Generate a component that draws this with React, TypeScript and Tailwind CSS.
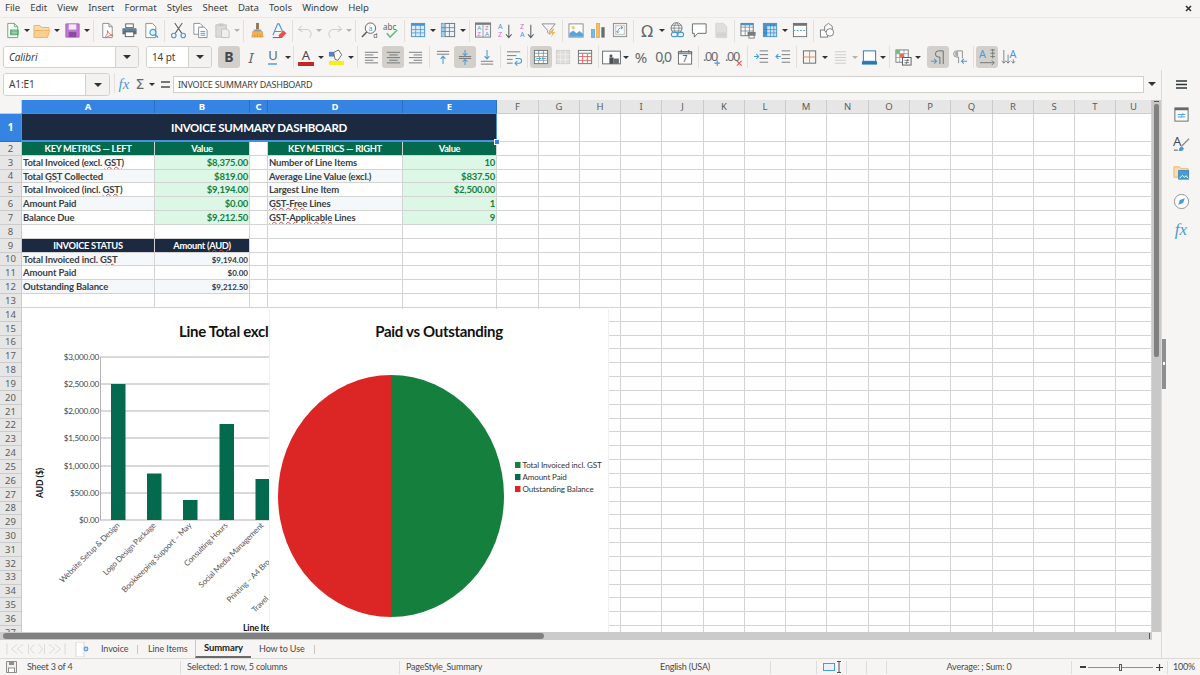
import React from "react";

const Sv = ({ children, s = 17 }: { children: React.ReactNode; s?: number }) => (
  <svg width={s} height={s} viewBox="0 0 18 18" fill="none" className="shrink-0 overflow-visible">
    {children}
  </svg>
);

const Btn = ({ children, active, w }: { children?: React.ReactNode; active?: boolean; w?: string }) => (
  <span
    className={`${w ?? "w-[22px]"} h-[22px] shrink-0 flex items-center justify-center rounded-[3px] ${
      active ? "bg-[#d3d0cc]" : ""
    }`}
  >
    {children}
  </span>
);

const Drop = ({ light }: { light?: boolean }) => (
  <span className="w-[8px] shrink-0 flex justify-center">
    <svg width="6" height="3" viewBox="0 0 6 3">
      <path d="M0 0h6L3 3z" fill={light ? "#b5b3b0" : "#2e3436"} />
    </svg>
  </span>
);

const Sep = ({ w }: { w?: string }) => (
  <span className={`${w ?? "w-[5px]"} shrink-0 h-[22px] flex justify-center`}>
    <span className="w-px h-full bg-[#e2e0dd]" />
  </span>
);

const G = "#5a5f62";
const B = "#4a9ad4";

/* toolbar 1 icons */
const INew = () => (
  <Sv>
    <path d="M4 1.5h7l3.5 3.5v11.5H4z" fill="#fff" stroke="#5aae72" />
    <path d="M11 1.5V5h3.5" stroke="#5aae72" />
    <rect x="6.5" y="8" width="9" height="6" fill="#4aa567" />
    <path d="M8 9.5h6M8 11h6M8 12.5h6" stroke="#d6f0de" strokeWidth=".7" />
  </Sv>
);
const IOpen = () => (
  <Sv s={18}>
    <path d="M1 3.5h6l1.5 2H16v3H1z" fill="#f9dcae" stroke="#efb365" />
    <path d="M1 15.5V8.5h15.5l-2 7z" fill="#fbcf8f" stroke="#efb365" />
  </Sv>
);
const ISave = () => (
  <Sv>
    <path d="M2 2h14v14H2z" fill="#c07ad2" stroke="#ab5ec0" />
    <rect x="5" y="2.5" width="8" height="5.5" fill="#f7ecfa" />
    <rect x="5" y="10.5" width="8" height="5.5" fill="#8d4aa2" />
  </Sv>
);
const IPdf = () => (
  <Sv>
    <path d="M4 1.5h6.5L14 5v11.5H4z" fill="#fff" stroke="#8a8e91" />
    <path d="M10.5 1.5V5H14" stroke="#8a8e91" />
    <path d="M6.5 16c2-2 3-5 2.5-7 1 3 3 5 6 5-3 0-6 1-8 3" stroke="#e8695e" fill="none" />
  </Sv>
);
const IPrint = () => (
  <Sv>
    <rect x="5" y="2" width="8" height="4" fill="#fff" stroke={G} />
    <path d="M1.5 7.5a1 1 0 011-1h13a1 1 0 011 1V13h-15z" fill="#666e72" />
    <rect x="4.5" y="10.5" width="9" height="5" fill="#fff" stroke={G} />
    <rect x="2" y="8" width="14" height="1" fill={B} />
  </Sv>
);
const IPreview = () => (
  <Sv>
    <path d="M3 1.5h7L13.5 5v11.5H3z" fill="#fff" stroke="#8a8e91" />
    <circle cx="10.5" cy="11" r="3.2" fill="#e5f1fa" stroke={B} strokeWidth="1.2" />
    <path d="M13 13.5l3 3" stroke={B} strokeWidth="1.4" />
  </Sv>
);
const ICut = () => (
  <Sv>
    <path d="M5 1l7.5 11M13 1L5.5 12" stroke={G} strokeWidth="1.1" />
    <circle cx="4" cy="14.3" r="2.4" stroke={B} strokeWidth="1.2" />
    <circle cx="14" cy="14.3" r="2.4" stroke={B} strokeWidth="1.2" />
  </Sv>
);
const ICopy = () => (
  <Sv>
    <path d="M2 1.5h6.5L11 4v9H2z" fill="#fff" stroke="#8a8e91" />
    <path d="M7 5.5h6l3 3v8H7z" fill="#fff" stroke="#8a8e91" />
    <path d="M9 10h5M9 12h5M9 14h5" stroke={B} />
  </Sv>
);
const IPaste = () => (
  <Sv>
    <path d="M2 3h11v13H2z" fill="#dcdbd9" stroke="#c2c1bf" />
    <rect x="5" y="1.5" width="5" height="3" fill="#c8c7c5" />
    <path d="M8 7.5h6l2 2v7H8z" fill="#f0efed" stroke="#c2c1bf" />
  </Sv>
);
const IClone = () => (
  <Sv>
    <rect x="7.5" y="1" width="3" height="7" fill="#94744f" />
    <path d="M5 8h8v2H5z" fill="#9a9d9f" />
    <path d="M4 10h10l1 6H3z" fill="#f4b256" stroke="#cf8d30" strokeWidth=".6" />
    <path d="M6 16v-3M9 16v-4M12 16v-3" stroke="#cf8d30" strokeWidth=".7" />
  </Sv>
);
const IClear = () => (
  <Sv>
    <path d="M2 14L7 2h1.5L13 12M4 10h7" stroke={B} strokeWidth="1.2" />
    <path d="M8 14l5-5 3.5 3-5 5H9z" fill="#e8524d" />
    <path d="M2 16.5h8" stroke={G} />
  </Sv>
);
const IUndo = () => (
  <Sv>
    <path d="M5 4L1.5 8 6 10.5M2 8h8a5 5 0 015 5 4 4 0 01-2 3.5" stroke="#cfcecc" strokeWidth="1.1" />
  </Sv>
);
const IRedo = () => (
  <Sv>
    <path d="M13 4l3.5 4-4.5 2.5M16 8H8a5 5 0 00-5 5 4 4 0 002 3.5" stroke="#cfcecc" strokeWidth="1.1" />
  </Sv>
);
const IFind = () => (
  <Sv>
    <circle cx="10" cy="6.5" r="5.5" fill="#fff" stroke={G} />
    <path d="M6 10.5L1 16" stroke={G} strokeWidth="1.6" />
    <text x="10" y="9" textAnchor="middle" fontSize="7.5" fill={B} fontFamily="Noto Sans, sans-serif">a</text>
    <text x="13" y="17" fontSize="7.5" fill={G} fontFamily="Noto Sans, sans-serif">d</text>
  </Sv>
);
const ISpell = () => (
  <Sv>
    <text x="0" y="8" fontSize="8.5" fill={G} fontFamily="Noto Sans, sans-serif">abc</text>
    <path d="M4 12l3.5 4L15 8.5" stroke="#5fbf7c" strokeWidth="1.6" />
  </Sv>
);
const ITable = () => (
  <Sv>
    <rect x="1.5" y="1.5" width="14" height="14" fill="#dcedf9" stroke="#4a94d2" />
    <rect x="1.5" y="1.5" width="14" height="2.5" fill="#4a94d2" />
    <path d="M1.5 8h14M1.5 11.5h14M6 1.5v14M11 1.5v14" stroke="#4a94d2" strokeWidth=".8" />
  </Sv>
);
const ITable2 = () => (
  <Sv>
    <rect x="1.5" y="1.5" width="14" height="14" fill="#eaf3fa" stroke="#6a7478" />
    <rect x="1.5" y="1.5" width="4" height="14" fill="#a2cdec" />
    <path d="M1.5 6h14M1.5 10h14M5.5 1.5v14M10 1.5v14" stroke="#6a7478" strokeWidth=".8" />
  </Sv>
);
const Lt = ({ x, y, c, t, s = 6.5 }: { x: number; y: number; c: string; t: string; s?: number }) => (
  <text x={x} y={y} fontSize={s} fill={c} fontFamily="Noto Sans, sans-serif">
    {t}
  </text>
);
const ISort = () => (
  <Sv>
    <rect x=".5" y="1" width="16" height="15" fill="#f4f3f1" stroke="#777b7e" />
    <rect x=".5" y="1" width="16" height="2" fill="#777b7e" />
    <path d="M8.5 3v13" stroke="#777b7e" strokeWidth=".7" />
    <Lt x={2.5} y={8.8} c={B} t="A" />
    <Lt x={2.5} y={15} c="#c76fd0" t="Z" />
    <Lt x={10.5} y={8.8} c="#c76fd0" t="Z" />
    <Lt x={10.5} y={15} c={B} t="A" />
  </Sv>
);
const ISortA = () => (
  <Sv>
    <Lt x={1} y={7.5} c={B} t="A" s={7.5} />
    <Lt x={1} y={16} c="#c76fd0" t="Z" s={7.5} />
    <path d="M12.5 3v13M9.5 13l3 3.5 3-3.5" stroke={G} strokeWidth="1.1" />
  </Sv>
);
const ISortD = () => (
  <Sv>
    <Lt x={1} y={7.5} c="#c76fd0" t="Z" s={7.5} />
    <Lt x={1} y={16} c={B} t="A" s={7.5} />
    <path d="M12.5 3v13M9.5 13l3 3.5 3-3.5" stroke={G} strokeWidth="1.1" />
  </Sv>
);
const IFilter = () => (
  <Sv>
    <path d="M1 2h14L9.5 9v4L7 11V9z" fill="#f8f7f5" stroke="#8a8e91" />
    <path d="M12.5 7l-3 5h2.5l-1.5 4.5 4.5-6h-2.5l1.5-3.5z" fill="#f4b256" />
  </Sv>
);
const IImage = () => (
  <Sv>
    <rect x="1" y="2" width="15" height="14" fill="#fff" stroke="#8a8e91" />
    <circle cx="5.5" cy="6" r="1.8" fill="#f7c26a" />
    <path d="M1.5 15.5V12l4-3 3.5 3 3-2.5 4 3v3z" fill="#5aa6dc" />
  </Sv>
);
const IChart = () => (
  <Sv>
    <rect x="1.5" y="8" width="3.5" height="8.5" fill="#7db8e2" stroke={B} strokeWidth=".6" />
    <rect x="6.8" y="1.5" width="3.5" height="15" fill="#f5bd5f" stroke="#e09c36" strokeWidth=".6" />
    <rect x="12" y="5.5" width="3.5" height="11" fill="#646d71" />
  </Sv>
);
const IPivot = () => (
  <Sv>
    <rect x="1.5" y="1.5" width="14" height="14" fill="#f1f0ee" stroke="#8a8e91" />
    <rect x="4" y="4" width="9" height="9" fill="#fff" stroke="#c2c1bf" />
    <path d="M6 11c0-3 2-5 5-5M9.5 4.5L11.5 6 9.5 7.5M4.8 9.5L6 11.5l1.5-1.5" stroke={B} />
  </Sv>
);
const IOmega = () => (
  <Sv>
    <text x="8.5" y="15.5" textAnchor="middle" fontSize="17" fill="#646a6d" fontFamily="DejaVu Sans, sans-serif">Ω</text>
  </Sv>
);
const ILink = () => (
  <Sv>
    <circle cx="8" cy="6.5" r="5.8" stroke="#646a6d" strokeWidth=".9" />
    <path d="M2.2 6.5h11.6M8 .7c-3.5 3.5-3.5 8 0 11.6M8 .7c3.5 3.5 3.5 8 0 11.6M3 3.5h10M3 9.5h10" stroke="#646a6d" strokeWidth=".7" />
    <rect x="2.5" y="11" width="7" height="4.5" rx="2.2" fill="#f6f5f4" stroke={B} strokeWidth="1.1" />
    <rect x="8.5" y="11" width="7" height="4.5" rx="2.2" stroke={B} strokeWidth="1.1" />
  </Sv>
);
const IComment = () => (
  <Sv>
    <path d="M1.5 2h14.5v10H7L3.5 16v-4h-2z" fill="#fff" stroke="#646a6d" />
  </Sv>
);
const IHeader = () => (
  <Sv>
    <path d="M3 1.5h8l3.5 3.5v11.5H3z" fill="#dfdedc" stroke="#d6d5d3" />
    <rect x="4" y="11" width="10" height="4.5" fill="#d4d3d1" />
  </Sv>
);
const IPrintArea = () => (
  <Sv>
    <rect x="1" y="1.5" width="13" height="13" fill="#fbfbfa" stroke="#6a7478" />
    <path d="M1 5.5h13M1 9.5h13M5.5 1.5v13M10 1.5v13" stroke="#6a7478" strokeWidth=".7" />
    <rect x="1" y="1.5" width="13" height="2" fill="#4a94d2" />
    <rect x="8" y="10.5" width="8.5" height="4" fill="#777b7e" />
    <rect x="9.5" y="14" width="5.5" height="3" fill="#fff" stroke="#777b7e" />
  </Sv>
);
const IFreeze = () => (
  <Sv>
    <rect x="1.5" y="1.5" width="14" height="14" fill="#c8e4f7" stroke="#4a94d2" />
    <rect x="1.5" y="1.5" width="14" height="3" fill="#4a94d2" />
    <rect x="1.5" y="1.5" width="4" height="14" fill="#4a94d2" />
    <path d="M1.5 8h14M1.5 11.5h14M9 1.5v14M12.5 1.5v14" stroke="#2b78bd" strokeWidth=".6" />
  </Sv>
);
const ISplit = () => (
  <Sv>
    <rect x="1.5" y="1.5" width="14" height="14" fill="#fff" stroke="#6a7478" />
    <rect x="1.5" y="1.5" width="14" height="2.5" fill="#6a7478" />
    <path d="M1.5 9h14" stroke={B} strokeDasharray="2 1.5" />
  </Sv>
);
const IShapes = () => (
  <Sv>
    <rect x="1.5" y="8.5" width="7.5" height="7.5" fill="#fff" stroke="#777b7e" />
    <path d="M10 1.5l4 3v5l-4 3-4-3v-5z" fill="#fff" stroke="#777b7e" />
    <circle cx="11.5" cy="11" r="4" fill="#fff" stroke="#777b7e" />
  </Sv>
);

/* toolbar 2 icons */
const Tx = ({ t, c = "#45494c", cls = "" }: { t: string; c?: string; cls?: string }) => (
  <span style={{ color: c }} className={`leading-none font-['Noto_Sans',sans-serif] ${cls}`}>
    {t}
  </span>
);
const IBold = () => <Tx t="B" cls="font-bold text-[14px]" />;
const IItalic = () => <Tx t="I" c="#646a6d" cls="italic text-[15px] font-['Liberation_Serif',serif]" />;
const IUnder = () => (
  <span className="flex flex-col items-center">
    <Tx t="U" c="#646a6d" cls="text-[13px]" />
    <span className="w-[9px] h-[1.5px] bg-[#7ab4e2] mt-px" />
  </span>
);
const IFontColor = () => (
  <span className="flex flex-col items-center w-[16px]">
    <Tx t="A" c="#45494c" cls="text-[13px]" />
    <span className="w-[16px] h-[4px] bg-[#c22626]" />
  </span>
);
const IHighlight = () => (
  <Sv>
    <path d="M1 3h8v5H1z" fill="#4b86c9" />
    <path d="M6 4l5-3 3.5 5-4 6-3-1z" fill="#fff" stroke="#646a6d" />
    <rect x="1" y="12.5" width="16" height="4.5" fill="#f5ee1e" />
  </Sv>
);
const Lines = ({ a }: { a: "l" | "c" | "r" }) => {
  const rows = [14, 9, 14, 9, 14];
  return (
    <Sv>
      {rows.map((w, i) => {
        const x = a === "l" ? 2 : a === "r" ? 16 - w : 9 - w / 2;
        return <path key={i} d={`M${x} ${3.5 + i * 2.8}h${w}`} stroke="#646a6d" strokeWidth=".9" />;
      })}
    </Sv>
  );
};
const IVTop = () => (
  <Sv>
    <path d="M2 2.5h13M2 5.5h13" stroke="#646a6d" strokeWidth=".9" />
    <path d="M8.5 16V8M6 10.5l2.5-3 2.5 3" stroke={B} strokeWidth="1.1" />
  </Sv>
);
const IVMid = () => (
  <Sv>
    <path d="M2 8h13M2 10h13" stroke="#646a6d" strokeWidth=".9" />
    <path d="M8.5 1v6M6 4.5L8.5 7 11 4.5M8.5 17v-6M6 13.5L8.5 11l2.5 2.5" stroke={B} strokeWidth="1.1" />
  </Sv>
);
const IVBot = () => (
  <Sv>
    <path d="M2 13h13M2 16h13" stroke="#646a6d" strokeWidth=".9" />
    <path d="M8.5 1v9M6 7.5l2.5 3 2.5-3" stroke={B} strokeWidth="1.1" />
  </Sv>
);
const IWrap = () => (
  <Sv>
    <path d="M1 3h14M1 7h10M1 11h6M1 15h6" stroke="#646a6d" strokeWidth=".9" />
    <path d="M10 10h4a2 2 0 010 5h-4M12 12.5L9.5 15l2.5 2.5" stroke={B} strokeWidth="1.1" />
  </Sv>
);
const IMerge = () => (
  <Sv>
    <rect x="1.5" y="1.5" width="14" height="14" fill="#fff" stroke="#6a7478" />
    <path d="M1.5 4.5h14M1.5 8h14M1.5 12h14M6 1.5V8M11 1.5V8M6 12v3.5M11 12v3.5" stroke="#6a7478" strokeWidth=".7" />
    <path d="M3.5 10H8M14 10H9.5M6.5 8.5L8 10l-1.5 1.5M11 8.5L9.5 10l1.5 1.5" stroke={B} />
  </Sv>
);
const IGreyGrid = () => (
  <Sv>
    <rect x="1.5" y="1.5" width="14" height="14" fill="#dfdedc" stroke="#cfcecc" />
    <path d="M1.5 6h14M1.5 11h14M6 1.5v14M11 1.5v14" stroke="#f1f0ee" strokeWidth=".8" />
  </Sv>
);
const IRedGrid = () => (
  <Sv>
    <rect x="1.5" y="1.5" width="14" height="14" fill="#fff" stroke="#6a7478" />
    <path d="M1.5 4.5h14" stroke="#6a7478" />
    <path d="M2 8h13M2 12h13M6 5v10M11 5v10" stroke="#de5a52" strokeWidth=".9" />
  </Sv>
);
const ICurrency = () => (
  <Sv s={19}>
    <rect x=".5" y="3" width="17" height="12" fill="#fbfbfa" stroke="#777b7e" />
    <rect x="7" y="9" width="4" height="6" fill="#4a5053" />
    <rect x="11" y="10" width="5" height="5" fill="#646a6d" />
    <circle cx="8.5" cy="7.5" r="1.4" fill="#4a5053" />
  </Sv>
);
const IPercent = () => <Tx t="%" c="#646a6d" cls="text-[15px]" />;
const INum = () => <Tx t="0,0" c="#646a6d" cls="text-[14px] tracking-[-1.5px]" />;
const IDate = () => (
  <Sv>
    <rect x="1.5" y="3" width="14" height="13" fill="#fff" stroke="#646a6d" />
    <path d="M1.5 3h14v2h-14zM4.5 1v3M12.5 1v3" stroke="#646a6d" />
    <text x="8.5" y="14" textAnchor="middle" fontSize="9" fill="#45494c" fontFamily="Noto Sans, sans-serif">7</text>
  </Sv>
);
const IDec = ({ add }: { add?: boolean }) => (
  <Sv>
    <text x="-1" y="13" fontSize="13.5" letterSpacing="-1.5" fill="#646a6d" fontFamily="Noto Sans, sans-serif">.00</text>
    {add ? (
      <path d="M14 12v6M11 15h6" stroke={B} strokeWidth="1.2" />
    ) : (
      <path d="M11.5 12.5l5 5M16.5 12.5l-5 5" stroke="#e8564e" strokeWidth="1.2" />
    )}
  </Sv>
);
const IIndent = ({ out }: { out?: boolean }) => (
  <Sv>
    <path d="M7 2h9M7 6h9M7 10h9M7 14h9" stroke="#646a6d" strokeWidth=".9" />
    {out ? (
      <path d="M6 8H1M3.5 5.5L1 8l2.5 2.5" stroke={B} strokeWidth="1.1" />
    ) : (
      <path d="M1 8h5M3.5 5.5L6 8l-2.5 2.5" stroke={B} strokeWidth="1.1" />
    )}
  </Sv>
);
const IBorders = () => (
  <Sv>
    <rect x="1.5" y="2" width="13" height="13" stroke="#646a6d" />
    <path d="M8 2v13M1.5 8.5h13" stroke="#de8c45" />
  </Sv>
);
const IBorderStyle = () => (
  <Sv>
    <path d="M3 3h12M3 6h12M3 9h12M3 12h12M3 15h12" stroke="#cfcecc" strokeWidth="1.1" />
  </Sv>
);
const IBorderColor = () => (
  <Sv>
    <rect x="2.5" y="2" width="13" height="11" fill="#fff" stroke="#2a76b8" />
    <rect x="1" y="13" width="16" height="3.5" fill="#2a76b8" />
  </Sv>
);
const ICond = () => (
  <Sv>
    <rect x="1" y="1" width="13" height="13" fill="#fff" stroke="#777b7e" />
    <path d="M1 5h13M1 9h13M5 1v13M9.5 1v13" stroke="#777b7e" strokeWidth=".6" />
    <rect x="1" y="1" width="4" height="4" fill="#78bb87" />
    <rect x="5" y="5" width="4.5" height="4" fill="#e66c62" />
    <rect x="8" y="9" width="9" height="8" fill="#fff" stroke="#55595c" />
    <path d="M10 12h5M10 14.5h5M13.8 10.5l-2 5.5" stroke="#55595c" strokeWidth=".8" />
  </Sv>
);
const ILtr = () => (
  <Sv>
    <path d="M14 2H9a3.2 3.2 0 000 6.5h1.5V16M14 2v14" stroke="#646a6d" strokeWidth="1" />
    <path d="M1 13h6M4.5 10.5L7 13l-2.5 2.5" stroke={B} strokeWidth="1.1" />
  </Sv>
);
const IRtl = () => (
  <Sv>
    <path d="M11 2H5a3.2 3.2 0 000 6.5h2V15M11 2v8" stroke="#8a8e91" strokeWidth="1" />
    <path d="M5 2.5a3 3 0 000 5.5h1.5V2.5z" fill="#a9a8a6" />
    <path d="M16 13h-6M12.5 10.5L10 13l2.5 2.5" stroke={B} strokeWidth="1.1" />
  </Sv>
);
const IHoriz = () => (
  <Sv>
    <text x="0" y="10" fontSize="11.5" fill={B} fontFamily="Noto Sans, sans-serif">A</text>
    <path d="M12 1h5M12 4.5h5M12 8h5M14.5 0v10" stroke="#646a6d" strokeWidth=".8" />
    <path d="M1 14.5h15M13.5 12l2.5 2.5L13.5 17" stroke="#646a6d" strokeWidth=".9" />
  </Sv>
);
const IVert = () => (
  <Sv>
    <text x="9" y="10" fontSize="11.5" fill={B} fontFamily="Noto Sans, sans-serif">A</text>
    <path d="M3 1v14M.8 12.5L3 15l2.2-2.5M7.5 6v9M5.3 12.5L7.5 15l2.2-2.5M13 11v4M11 13l2 2 2-2" stroke="#646a6d" strokeWidth=".8" />
  </Sv>
);

const Combo = ({ w, bw, text, italic, h }: { w: string; bw: string; text: string; italic?: boolean; h?: string }) => (
  <div className={`${w} ${h ?? "h-[23px]"} shrink-0 flex border border-[#d3d1cd] rounded-[3px] overflow-hidden`}>
    <div className={`flex-1 bg-white flex items-center pl-[5px] text-[10px] tracking-[-0.1px] text-[#3d3d3d] ${italic ? "italic" : ""}`}>{text}</div>
    <div className={`${bw} bg-[#f3f2f0] border-l border-[#d3d1cd] flex items-center justify-center`}>
      <svg width="8" height="4" viewBox="0 0 8 4">
        <path d="M0 0h8L4 4z" fill="#2e3436" />
      </svg>
    </div>
  </div>
);

const MENUS = ["File", "Edit", "View", "Insert", "Format", "Styles", "Sheet", "Data", "Tools", "Window", "Help"];

const Menu = () => (
  <div className="h-[17px] shrink-0 flex items-center pl-[5px] gap-[10.3px] text-[9.6px] text-[#3a3f42] tracking-[-0.1px]">
    {MENUS.map((m) => (
      <span key={m}>{m}</span>
    ))}
    <span className="ml-auto mr-[8px]">
      <svg width="7" height="7" viewBox="0 0 7 7">
        <path d="M1 1l5 5M6 1L1 6" stroke="#2e3436" strokeWidth="1.6" />
      </svg>
    </span>
  </div>
);

const Toolbar1 = () => (
  <div className="h-[26px] shrink-0 flex items-center pl-[1px] border-t border-[#ebe9e7]">
    <Btn><INew /></Btn><Drop />
    <Btn><IOpen /></Btn><Drop />
    <Btn><ISave /></Btn><Drop />
    <Sep />
    <Btn><IPdf /></Btn><Btn><IPrint /></Btn><Btn><IPreview /></Btn>
    <Sep />
    <Btn><ICut /></Btn><Btn><ICopy /></Btn><Btn><IPaste /></Btn><Drop light />
    <Sep />
    <Btn><IClone /></Btn><Btn><IClear /></Btn>
    <Sep />
    <Btn w="w-[20px]"><IUndo /></Btn><Drop light /><Btn><IRedo /></Btn><Drop light />
    <Sep />
    <Btn><IFind /></Btn><Btn><ISpell /></Btn>
    <Sep />
    <Btn><ITable /></Btn><Drop /><Btn><ITable2 /></Btn><Drop />
    <Sep />
    <Btn><ISort /></Btn><Btn><ISortA /></Btn><Btn><ISortD /></Btn><Btn><IFilter /></Btn>
    <Sep />
    <Btn><IImage /></Btn><Btn><IChart /></Btn><Btn><IPivot /></Btn>
    <Sep />
    <Btn><IOmega /></Btn><Drop /><Btn><ILink /></Btn><Btn><IComment /></Btn><Btn><IHeader /></Btn>
    <Sep />
    <Btn><IPrintArea /></Btn><Btn><IFreeze /></Btn><Drop /><Btn><ISplit /></Btn>
    <Sep />
    <Btn><IShapes /></Btn>
  </div>
);

const Toolbar2 = () => (
  <div className="h-[27px] shrink-0 flex items-center pl-[3px] pt-px">
    <Combo w="w-[136px]" bw="w-[23px]" text="Calibri" italic h="h-[22px]" />
    <span className="w-[7px] shrink-0" />
    <Combo w="w-[66px]" bw="w-[23px]" text="14 pt" h="h-[22px]" />
    <span className="w-[6px] shrink-0" />
    <Btn active><IBold /></Btn><Btn><IItalic /></Btn><Btn><IUnder /></Btn><Drop />
    <Sep w="w-[3px]" />
    <Btn><IFontColor /></Btn><Drop /><Btn><IHighlight /></Btn><Drop />
    <Sep />
    <Btn><Lines a="l" /></Btn><Btn active><Lines a="c" /></Btn><Btn><Lines a="r" /></Btn>
    <Sep w="w-[6px]" />
    <Btn><IVTop /></Btn><Btn active><IVMid /></Btn><Btn><IVBot /></Btn>
    <Sep />
    <Btn><IWrap /></Btn>
    <Sep />
    <Btn active><IMerge /></Btn><Btn><IGreyGrid /></Btn><Btn><IRedGrid /></Btn>
    <Sep />
    <Btn w="w-[21px]"><ICurrency /></Btn><Drop />
    <Btn><IPercent /></Btn><Btn><INum /></Btn><Btn><IDate /></Btn>
    <Sep />
    <Btn><IDec add /></Btn><Btn><IDec /></Btn>
    <Sep />
    <Btn><IIndent /></Btn><Btn><IIndent out /></Btn>
    <Sep />
    <Btn><IBorders /></Btn><Drop /><Btn><IBorderStyle /></Btn><Drop light />
    <Btn w="w-[20px]"><IBorderColor /></Btn><Drop />
    <Sep />
    <Btn><ICond /></Btn><Drop />
    <span className="w-[5px] shrink-0" />
    <Btn active><ILtr /></Btn><Btn><IRtl /></Btn>
    <Sep />
    <Btn active><IHoriz /></Btn><Btn><IVert /></Btn>
  </div>
);

const Formula = () => (
  <div className="h-[30px] shrink-0 flex items-start pt-[3px] pl-[3px]">
    <Combo w="w-[107px]" bw="w-[24px]" text="A1:E1" />
    <span className="w-[5px] shrink-0 h-[20px] flex justify-end"><span className="w-px h-full bg-[#e2e0dd]" /></span>
    <span className="w-[18px] h-[22px] flex items-center justify-center italic font-['Liberation_Serif',serif] text-[15px] text-[#4a9ad4]">
      fx
    </span>
    <span className="w-[14px] h-[22px] flex items-center justify-center text-[14px] text-[#646a6d] font-['DejaVu_Sans',sans-serif]">
      Σ
    </span>
    <span className="w-[10px] h-[22px] flex items-center justify-center">
      <svg width="6" height="3" viewBox="0 0 6 3"><path d="M0 0h6L3 3z" fill="#2e3436" /></svg>
    </span>
    <span className="w-[16px] h-[22px] flex items-center justify-center">
      <svg width="9" height="7" viewBox="0 0 9 7"><path d="M0 1h9M0 6h9" stroke="#4a4f52" strokeWidth="1.4" /></svg>
    </span>
    <div className="w-[971px] h-[17px] mt-[3px] bg-white border border-[#d1cfcb] flex items-center pl-[4px] text-[9px] tracking-[-0.2px] text-[#3d3d3d]">
      INVOICE SUMMARY DASHBOARD
    </div>
    <span className="w-[16px] h-[22px] flex items-center justify-center">
      <svg width="8" height="4" viewBox="0 0 8 4"><path d="M0 0h8L4 4z" fill="#2e3436" /></svg>
    </span>
  </div>
);

/* ----- sheet ----- */
const HEAD = "bg-[#e6e6e6] border-r border-b border-[#cbcbcb] flex items-center justify-center pt-px text-[9.5px] text-[#5c5c5c] overflow-hidden";
const HEAD_SEL = "bg-[#3584e4] border-r border-b border-[#2b6fc5] flex items-center justify-center pt-px text-[9.5px] font-bold text-white overflow-hidden";
const CELL = "border-r border-b border-[#d3d3d3] overflow-hidden whitespace-nowrap flex items-center font-['Lato',sans-serif] bg-white";
const LABEL = `${CELL} pt-px leading-[12px] text-[9.5px] tracking-[-0.15px] font-bold text-[#3a3e42] pl-[1px]`;
const LABEL_T = `${LABEL} !bg-[#f5f8fb]`;
const VALUE = `${CELL} pt-px leading-[12px] text-[9.5px] tracking-[-0.2px] font-bold text-[#15803d] justify-end pr-[1px] !bg-[#dcf7e5]`;
const GREEN_H = `${CELL} pt-px leading-[12px] text-[9.3px] tracking-[-0.3px] font-bold text-white justify-center !bg-[#046a4e]`;
const NAVY_H = `${CELL} pt-px leading-[12px] text-[9.3px] tracking-[-0.3px] font-bold text-white justify-center !bg-[#1b2a41]`;
const AMT = `${CELL} pt-px leading-[12px] text-[8px] font-bold text-[#33373b] justify-end pr-[1px]`;
const AMT_T = `${AMT} !bg-[#f5f8fb]`;

const W = ({ children }: { children: React.ReactNode }) => (
  <span className="underline decoration-wavy decoration-[#e0433a] decoration-[0.6px] underline-offset-[0px]">{children}</span>
);

const COLS = ["A", "B", "C", "D", "E", "F", "G", "H", "I", "J", "K", "L", "M", "N", "O", "P", "Q", "R", "S", "T", "U"];
const Blank = () => <div className={CELL} />;
const Blanks = ({ n }: { n: number }) => (
  <>
    {Array.from({ length: n }).map((_, i) => (
      <Blank key={i} />
    ))}
  </>
);

type Kv = [React.ReactNode, string];
const LEFT: Kv[] = [
  [<span>Total Invoiced (excl. <W>GST</W>)</span>, "$8,375.00"],
  [<span>Total <W>GST</W> Collected</span>, "$819.00"],
  [<span>Total Invoiced (incl. <W>GST</W>)</span>, "$9,194.00"],
  ["Amount Paid", "$0.00"],
  ["Balance Due", "$9,212.50"],
];
const RIGHT: Kv[] = [
  ["Number of Line Items", "10"],
  ["Average Line Value (excl.)", "$837.50"],
  ["Largest Line Item", "$2,500.00"],
  [<span><W>GST-Free</W> Lines</span>, "1"],
  [<span><W>GST-Applicable</W> Lines</span>, "9"],
];
const STATUS: Kv[] = [
  [<span>Total Invoiced incl. <W>GST</W></span>, "$9,194.00"],
  ["Amount Paid", "$0.00"],
  ["Outstanding Balance", "$9,212.50"],
];

const BARS = [
  { x: 111, top: 384 },
  { x: 147, top: 473.5 },
  { x: 183, top: 500 },
  { x: 219.5, top: 424 },
  { x: 255.5, top: 479 },
];
const TICKS: [string, number][] = [
  ["$3,000.00", 357],
  ["$2,500.00", 384],
  ["$2,000.00", 411],
  ["$1,500.00", 438],
  ["$1,000.00", 466],
  ["$500.00", 493],
  ["$0.00", 520],
];
const CATS: [string, number][] = [
  ["Website Setup & Design", 120],
  ["Logo Design Package", 156],
  ["Bookkeeping Support – May", 192],
  ["Consulting Hours", 228],
  ["Social Media Management", 264],
];
const LATO = "Lato, sans-serif";

const BarChart = () => (
  <svg width="247" height="324" viewBox="22 308 247 324" className="absolute left-[22px] top-[208px] bg-white">
    <text x="179" y="337" fontSize="15" letterSpacing="-0.3" fontWeight="700" fill="#111" fontFamily={LATO}>Line Total excl</text>
    {TICKS.map(([t, y]) => (
      <g key={t}>
        <path d={`M100 ${y}H269`} stroke="#b3b3b3" />
        <text x="99" y={y + 3} textAnchor="end" fontSize="8.2" letterSpacing="-0.2" fill="#444" fontFamily={LATO}>{t}</text>
      </g>
    ))}
    <path d="M100.5 357V520" stroke="#b3b3b3" />
    {BARS.map((b) => (
      <rect key={b.x} x={b.x} y={b.top} width="14.5" height={520 - b.top} fill="#046a4e" />
    ))}
    <text transform="translate(43 498) rotate(-90)" fontSize="8.5" fontWeight="700" fill="#111" fontFamily={LATO}>AUD ($)</text>
    {CATS.map(([t, x]) => (
      <text key={t} transform={`translate(${x} 526) rotate(-45)`} textAnchor="end" fontSize="8" letterSpacing="-0.2" fill="#555" fontFamily={LATO}>{t}</text>
    ))}
    <text transform="translate(230 603) rotate(-45)" fontSize="8" letterSpacing="-0.2" fill="#555" fontFamily={LATO}>Printing – A4 Bro</text>
    <text transform="translate(255 613) rotate(-45)" fontSize="8" letterSpacing="-0.2" fill="#555" fontFamily={LATO}>Travel</text>
    <text x="243" y="631" fontSize="8.8" letterSpacing="-0.2" fontWeight="700" fill="#111" fontFamily={LATO}>Line Ite</text>
  </svg>
);

const LEGEND: [string, string, number][] = [
  ["Total Invoiced incl. GST", "#15803d", 465],
  ["Amount Paid", "#046a4e", 477],
  ["Outstanding Balance", "#dc2626", 489],
];

const PieChart = () => (
  <svg width="340" height="323" viewBox="269 309 340 323" className="absolute left-[269px] top-[209px] bg-white">
    <path d="M269.5 309V632M608.5 309V632" stroke="#efefef" />
    <text x="439" y="337" textAnchor="middle" fontSize="15" letterSpacing="-0.3" fontWeight="700" fill="#111" fontFamily={LATO}>Paid vs Outstanding</text>
    <path d="M391 375A113 121 0 0 1 391 617Z" fill="#15803d" />
    <path d="M391 375A113 121 0 0 0 391 617Z" fill="#dc2626" />
    {LEGEND.map(([t, c, y]) => (
      <g key={t}>
        <rect x="515" y={y - 3} width="5.5" height="6" fill={c} />
        <text x="522.5" y={y + 3} fontSize="8" letterSpacing="-0.1" fill="#333" fontFamily={LATO}>{t}</text>
      </g>
    ))}
  </svg>
);

const Sheet = () => (
  <div className="relative w-[1152px] h-[532px] overflow-hidden bg-white">
    <div className="grid grid-cols-[22px_133px_95px_18px_135px_94px_42px_41px_41px_41px_42px_41px_41px_41px_42px_41px_41px_42px_41px_41px_41px_36px] grid-rows-[14px_28px_repeat(36,13.83px)]">
      <div className="bg-[#f6f5f4] border-r border-b border-[#cbcbcb]" />
      {COLS.map((c, i) => (
        <div key={c} className={i < 5 ? HEAD_SEL : HEAD}>{c}</div>
      ))}

      <div className={`${HEAD_SEL} !text-[10.5px]`}>1</div>
      <div className={`col-span-5 ${CELL} !bg-[#1b2a41] justify-center text-white font-bold text-[11.5px] tracking-[-0.3px]`}>
        INVOICE SUMMARY DASHBOARD
      </div>
      <Blanks n={16} />

      <div className={HEAD}>2</div>
      <div className={GREEN_H}>KEY METRICS — LEFT</div>
      <div className={GREEN_H}>Value</div>
      <Blank />
      <div className={GREEN_H}>KEY METRICS — RIGHT</div>
      <div className={GREEN_H}>Value</div>
      <Blanks n={16} />

      {LEFT.map((l, i) => (
        <React.Fragment key={i}>
          <div className={HEAD}>{i + 3}</div>
          <div className={i % 2 ? LABEL_T : LABEL}>{l[0]}</div>
          <div className={VALUE}>{l[1]}</div>
          <Blank />
          <div className={i % 2 ? LABEL_T : LABEL}>{RIGHT[i][0]}</div>
          <div className={VALUE}>{RIGHT[i][1]}</div>
          <Blanks n={16} />
        </React.Fragment>
      ))}

      <div className={HEAD}>8</div>
      <Blanks n={21} />

      <div className={HEAD}>9</div>
      <div className={NAVY_H}>INVOICE STATUS</div>
      <div className={NAVY_H}><span>Amount (<W>AUD</W>)</span></div>
      <Blanks n={19} />

      {STATUS.map((s, i) => (
        <React.Fragment key={i}>
          <div className={HEAD}>{i + 10}</div>
          <div className={i % 2 ? LABEL : LABEL_T}>{s[0]}</div>
          <div className={i % 2 ? AMT : AMT_T}>{s[1]}</div>
          <Blanks n={19} />
        </React.Fragment>
      ))}

      {Array.from({ length: 25 }).map((_, i) => (
        <React.Fragment key={i}>
          <div className={HEAD}>{i + 13}</div>
          <Blanks n={21} />
        </React.Fragment>
      ))}
    </div>

    {/* selection outline over A1:E1 */}
    <div className="absolute left-[21px] top-[13px] w-[476px] h-[29px] border border-b-2 border-[#4a90e2]" />
    <div className="absolute left-[495px] top-[40px] w-[4px] h-[4px] bg-[#3584e4] outline outline-1 outline-white" />

    <BarChart />
    <PieChart />
  </div>
);

const VScroll = () => (
  <div className="w-[9px] h-[532px] bg-[#c8c8c8] shrink-0">
    <div className="h-[1px] w-[5px] ml-[1.5px] mt-[1px] bg-[#555]" />
    <div className="w-[5px] ml-[1.5px] mt-[2px] h-[253px] bg-[#808080] rounded-[2px]" />
  </div>
);

const HScroll = () => (
  <div className="h-[8px] shrink-0 bg-[#cbcbcb] flex items-center justify-between pl-[3px] pr-[2px] w-[1152px]">
    <div className="w-[541px] h-[6px] bg-[#808080] rounded-[3px]" />
    <span className="w-px h-[6px] bg-[#555]" />
  </div>
);

const Tabs = () => (
  <div className="h-[18px] shrink-0 flex items-center text-[9px] tracking-[-0.1px] text-[#4a4a4a] font-['Lato',sans-serif]">
    <svg width="60" height="14" viewBox="0 0 64 14" className="ml-[6px] shrink-0">
      <path d="M1 1v12M12 2L6 7l6 5M18 2l-6 5 6 5M24 2v10M30 2l-4 5 4 5M35 2l4 5-4 5M41 2v10M46 2l6 5-6 5M52 2l6 5-6 5M63 1v12" stroke="#d8d7d5" fill="none" />
    </svg>
    <span className="w-[9px] shrink-0" />
    <svg width="16" height="15" viewBox="0 0 16 15" className="shrink-0">
      <path d="M1 0h8v15H1z" fill="#fff" stroke="#d7d6d4" />
      <circle cx="11" cy="7" r="2.4" fill="#4a9ad4" />
      <path d="M9.6 7h2.8M11 5.6v2.8" stroke="#fff" strokeWidth=".8" />
    </svg>
    <span className="w-[10px] shrink-0" />
    <span className="w-[26px] shrink-0">Invoice</span>
    <span className="w-px h-[9px] bg-[#c9c8c6] ml-[10px] mr-[10px] shrink-0" />
    <span className="w-[38px] shrink-0 whitespace-nowrap">Line Items</span>
    <span className="w-[56px] h-full ml-[9px] shrink-0 flex items-center justify-center border-l border-[#c9c8c6] border-b-2 border-b-[#6a6a6a] font-bold text-[9.5px] text-[#222]">
      Summary
    </span>
    <span className="ml-[8px] shrink-0 whitespace-nowrap">How to Use</span>
    <span className="w-px h-[9px] bg-[#c9c8c6] ml-[9px] shrink-0" />
  </div>
);

const IS1 = () => (
  <Sv>
    <rect x="2" y="2" width="14" height="14" fill="#fbfbfa" stroke="#646a6d" />
    <rect x="2" y="2" width="14" height="2.5" fill="#646a6d" />
    <path d="M5 9h8M5 11.5h8" stroke={B} />
    <path d="M10.5 7.5l-2 5" stroke={B} strokeWidth=".8" />
  </Sv>
);
const IS2 = () => (
  <Sv>
    <text x="0" y="12" fontSize="14" fill="#4a4f52" fontFamily="Noto Sans, sans-serif">A</text>
    <path d="M17 4L9 12" stroke="#8a8e91" strokeWidth="1.4" />
    <path d="M9 12c-2.5 1-2.5 3.5-3 5 2.5 0 5 0 5.5-3z" fill={B} />
    <path d="M1 16h4" stroke="#4a4f52" />
  </Sv>
);
const IS3 = () => (
  <Sv>
    <path d="M1 3h6l1.5 2H16v9H1z" fill="#f9dcae" stroke="#efb365" />
    <rect x="6" y="7" width="10.5" height="9" fill={B} stroke="#3a86c0" />
    <path d="M7 15l3-3 2 2 2-1.5 2 2.5" stroke="#fff" />
  </Sv>
);
const IS4 = () => (
  <Sv>
    <circle cx="9" cy="9" r="7.5" fill="#fff" stroke="#8a8e91" />
    <path d="M12.5 5.5l-1.8 5.2-5.2 1.8 1.8-5.2z" fill={B} />
  </Sv>
);

const Sidebar = () => (
  <div className="w-[39px] shrink-0 border-l border-[#dcdad7] flex flex-col items-center pt-[10px] relative">
    <svg width="11" height="9" viewBox="0 0 11 9">
      <path d="M0 1h11M0 4.5h11M0 8h11" stroke="#2e3436" strokeWidth="1.3" />
    </svg>
    <div className="h-[17px] shrink-0" />
    <IS1 />
    <div className="h-[12px] shrink-0" />
    <IS2 />
    <div className="h-[12px] shrink-0" />
    <IS3 />
    <div className="h-[12px] shrink-0" />
    <IS4 />
    <div className="h-[10px] shrink-0" />
    <span className="italic font-['Liberation_Serif',serif] text-[17px] leading-[20px] text-[#4a9ad4]">fx</span>
    {/* collapse handle over the sidebar's edge */}
    <div className="absolute left-0 top-[269px] w-[4px] h-[50px] bg-[#8f8f8f]">
      <div className="absolute left-[1px] top-[23px] w-[2px] h-[3px] bg-white" />
    </div>
  </div>
);

const StatusSep = () => <span className="w-px h-[13px] bg-[#dfdddb] shrink-0" />;

const Status = () => (
  <div className="h-[17px] shrink-0 flex items-center border-t border-[#dcdad7] text-[9px] tracking-[-0.2px] text-[#4a4a4a] whitespace-nowrap font-['Lato',sans-serif]">
    <span className="ml-[6px] w-[21px] shrink-0 flex">
      <svg width="11" height="12" viewBox="0 0 11 12">
        <path d="M.5 .5h10v11H.5z" fill="#f0efed" stroke="#8d8d8b" />
        <rect x="3" y="1" width="5" height="3" fill="#8d8d8b" />
        <rect x="2.5" y="7" width="6" height="4.5" fill="#fff" stroke="#8d8d8b" />
      </svg>
    </span>
    <span className="w-[153px] shrink-0">Sheet 3 of 4</span>
    <StatusSep />
    <span className="w-[218px] shrink-0 pl-[6px]">Selected: 1 row, 5 columns</span>
    <StatusSep />
    <span className="w-[200px] shrink-0 pl-[6px]">PageStyle_Summary</span>
    <span className="w-[170px] shrink-0 text-center">English (USA)</span>
    <StatusSep />
    <span className="w-[45px] shrink-0" />
    <StatusSep />
    <span className="w-[29px] shrink-0 flex pl-[6px]">
      <svg width="20" height="12" viewBox="0 0 20 12">
        <rect x=".5" y="2.5" width="11" height="7" fill="#eaf3fa" stroke={B} />
        <path d="M14 .5h4M16 .5v11M14 11.5h4" stroke="#4a4f52" fill="none" />
      </svg>
    </span>
    <StatusSep />
    <span className="w-[19px] shrink-0" />
    <StatusSep />
    <span className="w-[19px] shrink-0" />
    <StatusSep />
    <span className="w-[184px] shrink-0 text-center">Average: ; Sum: 0</span>
    <StatusSep />
    <span className="ml-[8px] w-[6px] h-[1.5px] bg-[#3d3d3d] shrink-0" />
    <span className="ml-[2px] w-[65px] h-px bg-[#8f8f8f] shrink-0 relative">
      <span className="absolute left-[31px] -top-[3px] w-[3px] h-[7px] border border-[#5a5a5a] bg-[#eee]" />
    </span>
    <svg width="7" height="7" viewBox="0 0 7 7" className="ml-[3px] shrink-0">
      <path d="M0 3.5h7M3.5 0v7" stroke="#3d3d3d" strokeWidth="1.2" />
    </svg>
    <span className="ml-[4px] w-px h-[13px] bg-[#dfdddb] shrink-0" />
    <span className="ml-[5px] shrink-0">100%</span>
  </div>
);

export default function App() {
  return (
    <div className="w-[1200px] h-[675px] flex flex-col bg-[#f6f5f4] overflow-hidden font-['Noto_Sans',sans-serif]">
      <Menu />
      <Toolbar1 />
      <Toolbar2 />
      <div className="flex-1 flex min-h-0">
        <div className="w-[1161px] shrink-0 flex flex-col">
          <Formula />
          <div className="flex">
            <Sheet />
            <VScroll />
          </div>
          <HScroll />
          <Tabs />
        </div>
        <Sidebar />
      </div>
      <Status />
    </div>
  );
}
